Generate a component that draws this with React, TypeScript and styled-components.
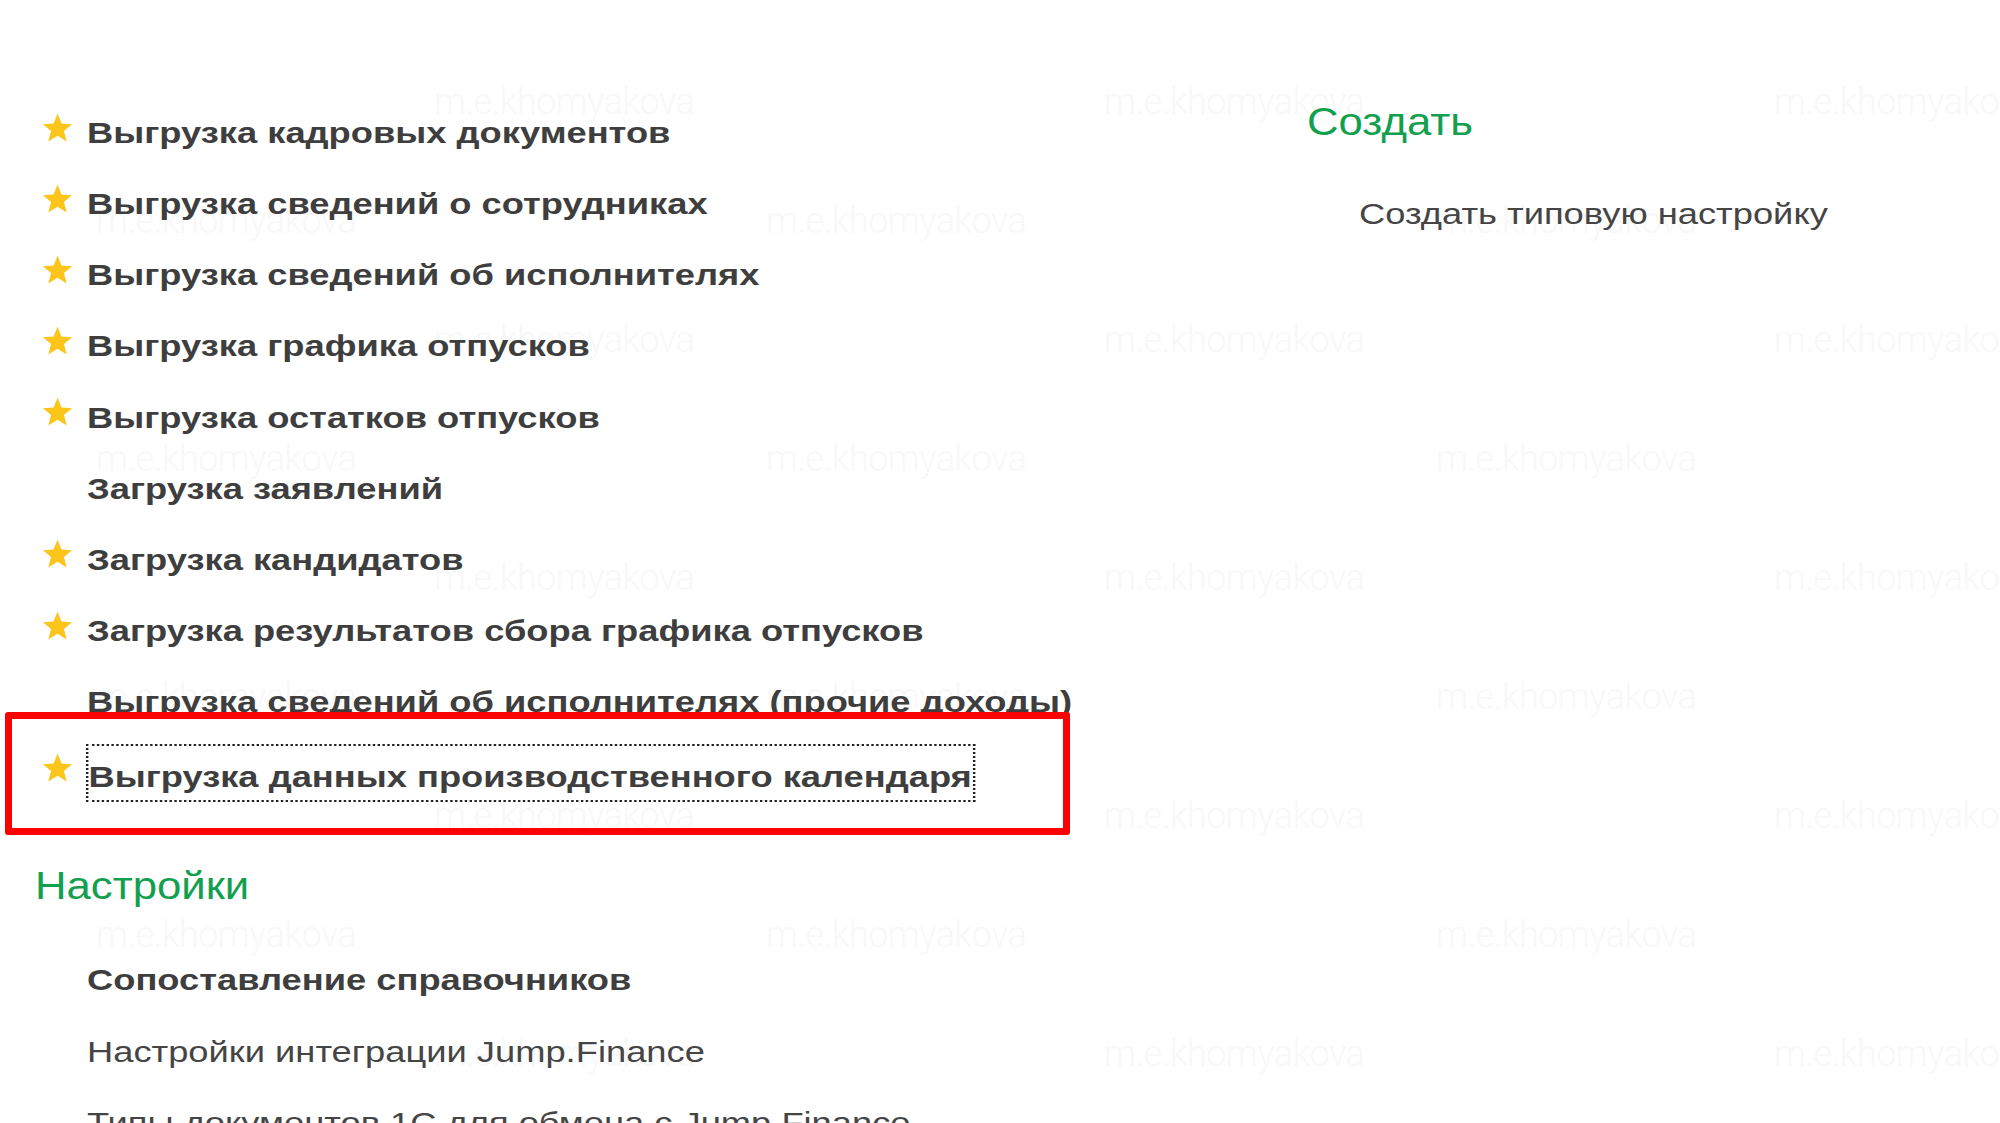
import React from "react";
import styled, { createGlobalStyle } from "styled-components";

const GlobalStyle = createGlobalStyle`
  html, body {
    margin: 0;
    padding: 0;
    background: #ffffff;
  }
  body {
    font-family: "Liberation Sans", Arial, sans-serif;
    overflow: hidden;
  }
`;

const Page = styled.div`
  position: relative;
  width: 2000px;
  height: 1123px;
  overflow: hidden;
  background: #ffffff;
`;

const WatermarkLayer = styled.div`
  position: absolute;
  left: 0;
  top: 42px;
  right: 0;
  display: flex;
  flex-direction: column;
  pointer-events: none;
  z-index: 0;
`;

const WatermarkRow = styled.div<{ $offset: number }>`
  display: flex;
  height: 119px;
  align-items: center;
  padding-left: ${(p) => p.$offset}px;
`;

const Watermark = styled.span`
  flex: 0 0 670px;
  font-family: Roboto, "Liberation Sans", sans-serif;
  font-weight: 300;
  font-size: 36px;
  color: #f8f8f8;
  letter-spacing: -0.5px;
  white-space: nowrap;
`;

const Content = styled.div`
  position: relative;
  z-index: 1;
  display: grid;
  grid-template-columns: 1307px 1fr;
  padding-top: 97px;
`;

const Column = styled.div<{ $left: number; $top?: number }>`
  display: flex;
  flex-direction: column;
  align-items: flex-start;
  padding-left: ${(p) => p.$left}px;
  padding-top: ${(p) => p.$top ?? 0}px;
`;

const SectionTitle = styled.div<{ $mt?: number; $mb?: number }>`
  font-size: 38px;
  line-height: 44px;
  color: #12a04f;
  margin-top: ${(p) => p.$mt ?? 0}px;
  margin-bottom: ${(p) => p.$mb ?? 0}px;
  white-space: nowrap;
  transform: scaleX(1.15);
  transform-origin: left center;
`;

const Row = styled.div<{ $indent: number }>`
  position: relative;
  display: flex;
  align-items: center;
  height: 71.15px;
  padding-left: ${(p) => p.$indent}px;
  white-space: nowrap;
`;

const StarSlot = styled.div`
  flex: 0 0 31px;
  height: 31px;
  margin-right: 14px;
  margin-bottom: 10px;
  display: flex;
  align-items: center;
  justify-content: center;
`;

const Label = styled.span<{ $bold?: boolean }>`
  display: inline-block;
  font-size: 30px;
  line-height: 35px;
  font-weight: ${(p) => (p.$bold ? 700 : 400)};
  color: ${(p) => (p.$bold ? "#3e3e3e" : "#454545")};
  transform: scaleX(1.21);
  transform-origin: left center;
`;

const FocusLabel = styled(Label)`
  margin-left: -1px;
  padding: 8px 1px 0 0;
  line-height: 46px;
  border: 2px dotted #222;
`;

const Highlight = styled.div`
  position: absolute;
  left: -30px;
  width: 1065px;
  top: -25px;
  height: 123px;
  box-sizing: border-box;
  border: 7px solid #ff0000;
  border-radius: 3px;
  pointer-events: none;
`;

const Star = () => (
  <svg width="31" height="30" viewBox="0 0 24 23" aria-hidden="true">
    <polygon
      points="12,0.5 15.1,8.1 23.3,8.6 17,13.9 19.1,22 12,17.5 4.9,22 7,13.9 0.7,8.6 8.9,8.1"
      fill="#fcc51c"
    />
  </svg>
);

type Item = { text: string; star: boolean; focus?: boolean };

const items: Item[] = [
  { text: "Выгрузка кадровых документов", star: true },
  { text: "Выгрузка сведений о сотрудниках", star: true },
  { text: "Выгрузка сведений об исполнителях", star: true },
  { text: "Выгрузка графика отпусков", star: true },
  { text: "Выгрузка остатков отпусков", star: true },
  { text: "Загрузка заявлений", star: false },
  { text: "Загрузка кандидатов", star: true },
  { text: "Загрузка результатов сбора графика отпусков", star: true },
  { text: "Выгрузка сведений об исполнителях (прочие доходы)", star: false },
  { text: "Выгрузка данных производственного календаря", star: true, focus: true },
];

const settings = [
  { text: "Сопоставление справочников", bold: true },
  { text: "Настройки интеграции Jump.Finance", bold: false },
  { text: "Типы документов 1С для обмена с Jump.Finance", bold: false },
];

const watermarkRows = Array.from({ length: 9 }, (_, i) => i);

export default function App() {
  return (
    <Page>
      <GlobalStyle />
      <WatermarkLayer>
        {watermarkRows.map((i) => (
          <WatermarkRow key={i} $offset={i % 2 === 0 ? 434 : 96}>
            <Watermark>m.e.khomyakova</Watermark>
            <Watermark>m.e.khomyakova</Watermark>
            <Watermark>m.e.khomyakova</Watermark>
          </WatermarkRow>
        ))}
      </WatermarkLayer>
      <Content>
        <Column $left={35}>
          {items.map((it) => (
            <Row key={it.text} $indent={7}>
              <StarSlot>{it.star ? <Star /> : null}</StarSlot>
              {it.focus ? (
                <FocusLabel $bold>{it.text}</FocusLabel>
              ) : (
                <Label $bold>{it.text}</Label>
              )}
              {it.focus ? <Highlight /> : null}
            </Row>
          ))}
          <SectionTitle $mt={56} $mb={36}>
            Настройки
          </SectionTitle>
          {settings.map((s) => (
            <Row key={s.text} $indent={52}>
              <Label $bold={s.bold}>{s.text}</Label>
            </Row>
          ))}
        </Column>
        <Column $left={0} $top={3}>
          <SectionTitle $mb={34}>Создать</SectionTitle>
          <Row $indent={52}>
            <Label>Создать типовую настройку</Label>
          </Row>
        </Column>
      </Content>
    </Page>
  );
}
